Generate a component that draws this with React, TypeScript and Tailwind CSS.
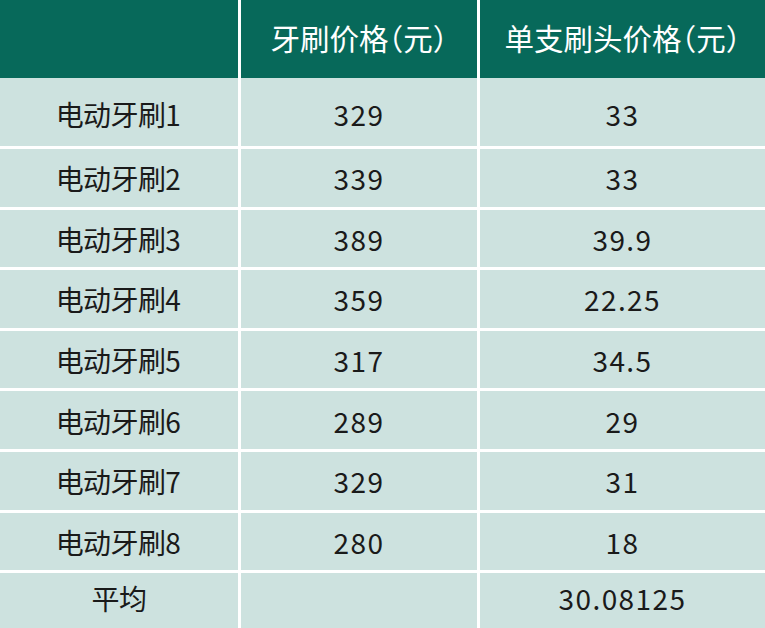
import React from "react";

const rows: [string, string, string][] = [
  ["电动牙刷1", "329", "33"],
  ["电动牙刷2", "339", "33"],
  ["电动牙刷3", "389", "39.9"],
  ["电动牙刷4", "359", "22.25"],
  ["电动牙刷5", "317", "34.5"],
  ["电动牙刷6", "289", "29"],
  ["电动牙刷7", "329", "31"],
  ["电动牙刷8", "280", "18"],
  ["平均", "", "30.08125"],
];

const font = { fontFamily: '"Noto Sans CJK SC", "Noto Sans", sans-serif' };

function Txt({ s }: { s: string }) {
  const parts = s.match(/[0-9.]+|[^0-9.]+/g) || [];
  return (
    <span className="whitespace-nowrap">
      {parts.map((p, k) =>
        /[0-9.]/.test(p) ? (
          <span key={k} className="text-[28px] tracking-[1.4px]">
            {p}
          </span>
        ) : (
          <span key={k} className="text-[28px] tracking-[-0.6px]">
            {p}
          </span>
        )
      )}
    </span>
  );
}

export default function App() {
  return (
    <div className="w-[765px] h-[628px] overflow-hidden bg-white" style={font}>
      <div className="grid grid-cols-[238px_236px_1fr] gap-x-[3px] h-[78px]">
        <div className="bg-[#07695a]" />
        <div className="bg-[#07695a] flex items-center justify-center pb-[2px] text-white text-[29.5px] leading-none [font-feature-settings:'halt']">
          牙刷价格（元）
        </div>
        <div className="bg-[#07695a] flex items-center justify-center pb-[2px] text-white text-[29.5px] leading-none [font-feature-settings:'halt']">
          单支刷头价格（元）
        </div>
      </div>
      {rows.map((r, i) => {
        const rowCls =
          i === 0
            ? "h-[68px]"
            : i === 8
            ? "mt-[3px] h-[56px]"
            : "mt-[3px] h-[57.6px]";
        const cellPad = i === 0 ? "pt-[4px]" : i === 8 ? "pb-[6px]" : "pt-[1px]";
        return (
          <div
            key={i}
            className={
              "grid grid-cols-[238px_236px_1fr] gap-x-[3px] leading-none text-[#1a1a1a] " + rowCls
            }
          >
            {r.map((c, j) => (
              <div
                key={j}
                className={"bg-[#cde2df] flex items-center justify-center " + cellPad}
              >
                <Txt s={c} />
              </div>
            ))}
          </div>
        );
      })}
    </div>
  );
}
